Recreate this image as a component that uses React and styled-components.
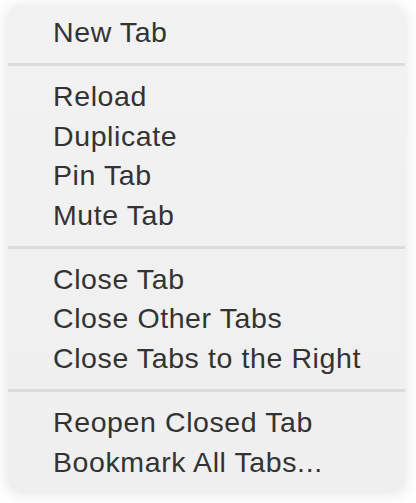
import styled, { createGlobalStyle } from "styled-components"

const GlobalStyle = createGlobalStyle`
  html, body {
    margin: 0;
    padding: 0;
    background: #ffffff;
  }
`

const groups = [
  ["New Tab"],
  ["Reload", "Duplicate", "Pin Tab", "Mute Tab"],
  ["Close Tab", "Close Other Tabs", "Close Tabs to the Right"],
  ["Reopen Closed Tab", "Bookmark All Tabs..."],
]

const App = () => {
  return (
    <>
      <GlobalStyle />
      <Page>
        <Menu>
          {groups.map((items, i) => (
            <Group key={i}>
              {i > 0 && <Separator />}
              {items.map((label) => (
                <Item key={label}>{label}</Item>
              ))}
            </Group>
          ))}
        </Menu>
      </Page>
    </>
  )
}

const Page = styled.div`
  width: 416px;
  height: 503px;
  padding: 5px 11px 0 8px;
  box-sizing: border-box;
`

const Menu = styled.div`
  background: linear-gradient(#f2f2f2, #efefef);
  border-radius: 11px;
  box-shadow: 0 2px 16px rgba(0, 0, 0, 0.12), 0 0 1px rgba(0, 0, 0, 0.06);
  padding: 8px 0 9px;
  display: flex;
  flex-direction: column;
`

const Group = styled.div`
  display: flex;
  flex-direction: column;
`

const Separator = styled.div`
  height: 3px;
  margin: 11px 0 11px;
  background: #dcdcdc;
`

const Item = styled.div`
  height: 39.4px;
  line-height: 39.4px;
  padding-left: 45px;
  font-family: "Liberation Sans", Arial, sans-serif;
  font-size: 28.5px;
  letter-spacing: 0.6px;
  color: #333333;
  white-space: nowrap;
`

export default App
